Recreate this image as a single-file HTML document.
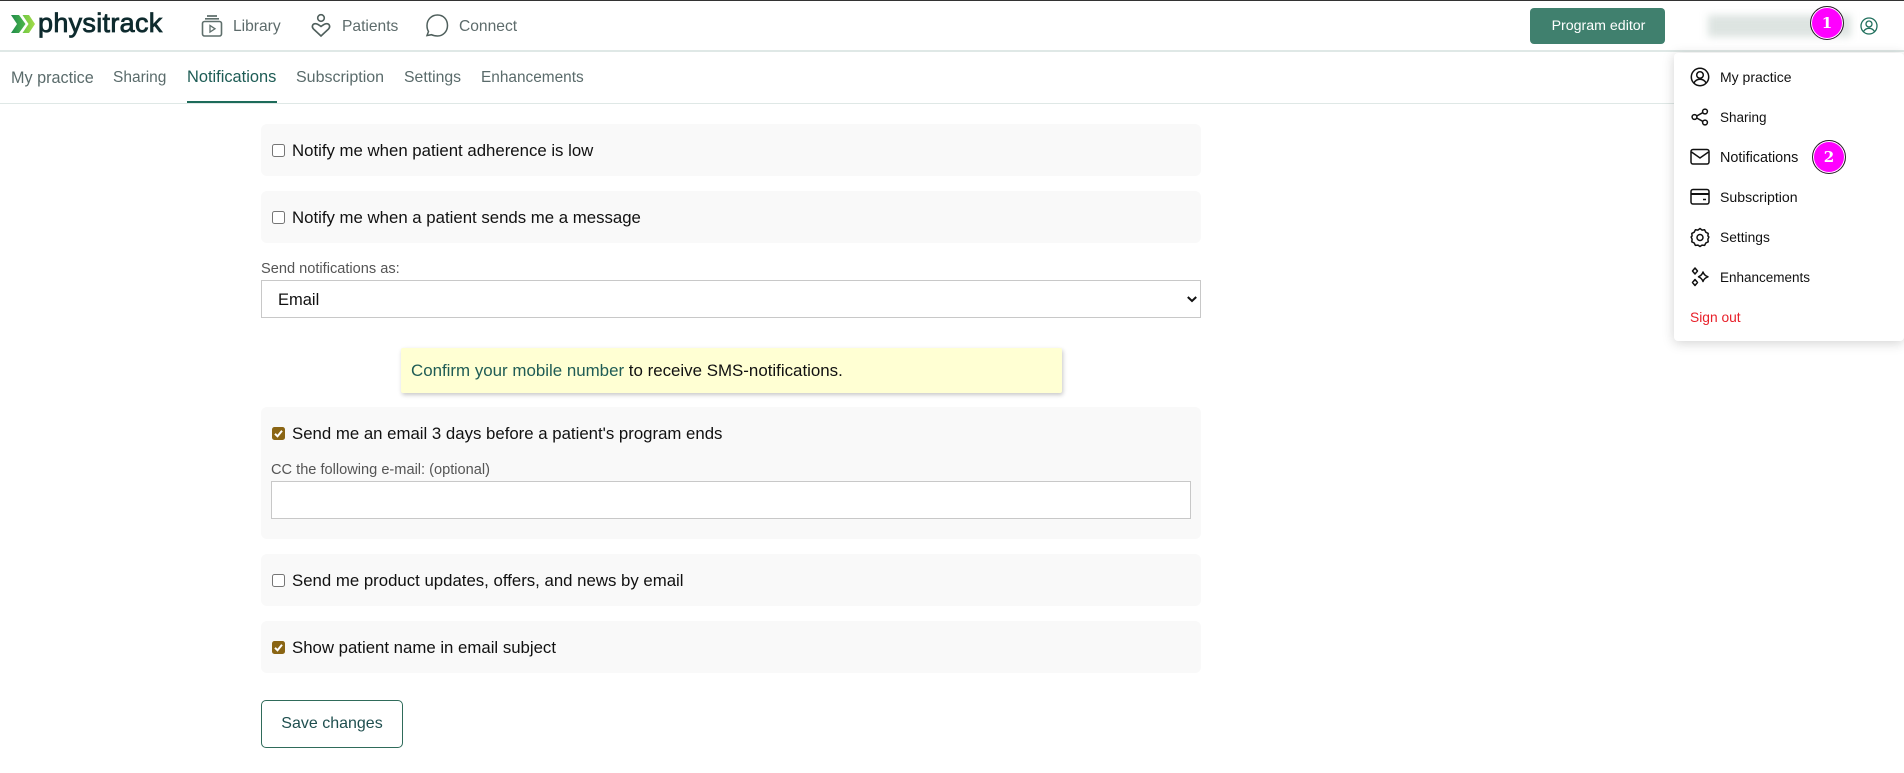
<!DOCTYPE html>
<html lang="en"><head><meta charset="utf-8"><title>Notifications</title>
<style>
*{box-sizing:border-box}
html,body{margin:0;padding:0;width:1904px;height:773px;overflow:hidden;background:#fff;font-family:"Liberation Sans",sans-serif}
.t{position:absolute;white-space:nowrap;line-height:20px;margin:0}
.a{position:absolute}
.nav{font-size:15.6px;color:#5d6b6b}
.sub{color:#5a6b6b}
.row{position:absolute;left:261px;width:940px;background:#f9f9f9;border-radius:6px}
.lab{font-size:16.8px;color:#111;left:292px}
.cb{position:absolute;left:272px;width:13px;height:13px;border:1px solid #767676;border-radius:2.500px;background:#fff}
.cb.on{background:#8a6514;border:0}
.m{position:absolute;left:1720px;color:#111}
svg{position:absolute;overflow:visible}
.circ{position:absolute;width:34px;height:34px;border-radius:50%;background:#f0f;border:1px solid #222;box-shadow:inset 0 0 0 1px #fff;color:#fff;font:bold 15px/32px "DejaVu Serif",serif;text-align:center}
</style></head><body>
<div class="a" style="left:0;top:0;width:1904px;height:1px;background:#333"></div>
<div class="a" style="left:0;top:50px;width:1904px;height:2px;background:#dfe8e6"></div>
<div class="a" style="left:0;top:103px;width:1904px;height:1px;background:#dfe8e6"></div>

<svg style="left:0;top:0" width="60" height="50"><defs><linearGradient id="g1" x1="0" x2="1"><stop offset="0" stop-color="#1f8a4c"/><stop offset="1" stop-color="#4fb84a"/></linearGradient><linearGradient id="g2" x1="0" x2="1"><stop offset="0" stop-color="#6cc644"/><stop offset="1" stop-color="#a5dc4a"/></linearGradient></defs>
<path d="M11 15h8l6.500 9-6.500 9h-8l6-9z" fill="url(#g1)"/><path d="M22.500 15h6.500l6 9-6 9h-6.500l6-9z" fill="url(#g2)"/></svg>
<div class="t" style="left:38px;top:11px;font-size:27px;line-height:24px;color:#0e2b2e;letter-spacing:.3px;-webkit-text-stroke:.8px #0e2b2e">physitrack</div>

<svg style="left:200px;top:12px" width="24" height="28" fill="none" stroke="#5f6f6c" stroke-width="1.6"><path d="M7 4h10M5 6.800h14" stroke-width="1.700"/><rect x="2.500" y="9.500" width="19" height="14.500" rx="2"/><path d="M10 13.500v6.500l5-3.200z" stroke-width="1.300"/></svg>
<div class="t nav" style="left:233px;top:17px">Library</div>
<svg style="left:310px;top:12px" width="22" height="28" fill="none" stroke="#4f5f5c" stroke-width="1.600"><circle cx="11" cy="6" r="3.300"/><path d="M11 24l-7.500-7c-2.200-2.200-1-5 1.500-5.300 2.500-.3 4 1.500 6 2.800 2-1.300 3.500-3.100 6-2.800 2.500.3 3.700 3.100 1.500 5.300z"/></svg>
<div class="t nav" style="left:342px;top:17px">Patients</div>
<svg style="left:425px;top:12px" width="24" height="28" fill="none" stroke="#4f5f5c" stroke-width="1.500"><path d="M12.500 3c6 0 10 4.500 10 10.500S18 24 12.500 24c-2.500 0-4.500-.5-6-1.300L2 23.500l1.500-4C2.500 18 2 16 2 13.500 2 7.500 6.500 3 12.500 3z"/></svg>
<div class="t nav" style="left:459px;top:17px">Connect</div>

<div class="a" style="left:1530px;top:8px;width:135px;height:36px;background:#40806e;border-radius:4px;color:#fff;font-size:14.200px;line-height:36px;text-align:center;padding-left:2px">Program editor</div>
<div class="a" style="left:1708px;top:15px;width:143px;height:22px;background:#dde4e1;filter:blur(4px)"></div>
<div class="circ" style="left:1810px;top:6px">1</div>
<svg style="left:1860px;top:17px" width="18" height="18" fill="none" stroke="#1f6f5c" stroke-width="1.300"><circle cx="9" cy="9" r="8"/><circle cx="9" cy="7" r="3"/><path d="M3.500 14.500c1.500-2.500 3.500-3.200 5.500-3.200s4 .7 5.500 3.200"/></svg>

<div class="t sub" style="left:11px;top:68px;font-size:16.2px">My practice</div>
<div class="t sub" style="left:113px;top:68px;font-size:15.5px">Sharing</div>
<div class="t sub" style="left:187px;top:67px;color:#1d5c55;font-size:16.4px">Notifications</div>
<div class="t sub" style="left:296px;top:68px;font-size:16px">Subscription</div>
<div class="t sub" style="left:404px;top:68px;font-size:15.8px">Settings</div>
<div class="t sub" style="left:481px;top:68px;font-size:15.4px">Enhancements</div>
<div class="a" style="left:187px;top:101px;width:90px;height:2px;background:#1d6b5a"></div>

<div class="row" style="top:124px;height:52px"></div>
<div class="cb" style="top:144px"></div>
<div class="t lab" style="top:141px">Notify me when patient adherence is low</div>
<div class="row" style="top:191px;height:52px"></div>
<div class="cb" style="top:211px"></div>
<div class="t lab" style="top:208px">Notify me when a patient sends me a message</div>

<div class="t" style="left:261px;top:259px;font-size:14.6px;color:#555">Send notifications as:</div>
<div class="a" style="left:261px;top:280px;width:940px;height:38px;border:1px solid #c8c8c8;background:#fff"></div>
<div class="t" style="left:278px;top:290px;font-size:16.5px;color:#111">Email</div>
<svg style="left:1187px;top:296px" width="10" height="7" fill="none" stroke="#111" stroke-width="2"><path d="M.8 1l4.200 4 4.200-4"/></svg>

<div class="a" style="left:401px;top:348px;width:661px;height:45px;background:#ffffd3;border-radius:2px;box-shadow:1px 2px 4px rgba(0,0,0,.22)"></div>
<div class="t" style="left:411px;top:361px;font-size:16.9px;color:#111"><span style="color:#1f5c55">Confirm your mobile number</span> to receive SMS-notifications.</div>

<div class="row" style="top:407px;height:132px"></div>
<div class="cb on" style="top:427px"></div>
<svg style="left:272px;top:427px" width="13" height="13" fill="none" stroke="#fff" stroke-width="2"><path d="M3 6.800l2.500 2.500L10 3.800"/></svg>
<div class="t lab" style="top:424px">Send me an email 3 days before a patient's program ends</div>
<div class="t" style="left:271px;top:460px;font-size:14.6px;color:#555">CC the following e-mail: (optional)</div>
<div class="a" style="left:271px;top:481px;width:920px;height:38px;border:1px solid #c8c8c8;background:#fff"></div>

<div class="row" style="top:554px;height:52px"></div>
<div class="cb" style="top:574px"></div>
<div class="t lab" style="top:571px">Send me product updates, offers, and news by email</div>
<div class="row" style="top:621px;height:52px"></div>
<div class="cb on" style="top:641px"></div>
<svg style="left:272px;top:641px" width="13" height="13" fill="none" stroke="#fff" stroke-width="2"><path d="M3 6.800l2.500 2.500L10 3.800"/></svg>
<div class="t lab" style="top:638px">Show patient name in email subject</div>

<div class="a" style="left:261px;top:700px;width:142px;height:48px;border:1px solid #2f6b5a;border-radius:5px;color:#1f4f4f;font-size:16px;line-height:46px;text-align:center">Save changes</div>

<div class="a" style="left:1674px;top:53px;width:230px;height:288px;background:#fff;border-radius:4px;box-shadow:0 2px 12px rgba(0,0,0,.18)"></div>
<svg style="left:1690px;top:67px" width="20" height="20" fill="none" stroke="#111" stroke-width="1.500"><circle cx="10" cy="10" r="8.700"/><circle cx="10" cy="8" r="3.300"/><path d="M4 16c1.500-3 4-3.700 6-3.700s4.500.7 6 3.700"/></svg>
<div class="t m" style="top:67px;font-size:14px">My practice</div>
<svg style="left:1691px;top:108px" width="18" height="18" fill="none" stroke="#111" stroke-width="1.500"><circle cx="3.500" cy="9" r="2.400"/><circle cx="14" cy="3.500" r="2.400"/><circle cx="14" cy="14.500" r="2.400"/><path d="M5.700 8l6-3.300M5.700 10l6 3.300"/></svg>
<div class="t m" style="top:108px;font-size:13.5px">Sharing</div>
<svg style="left:1690px;top:148px" width="20" height="18" fill="none" stroke="#111" stroke-width="1.500"><rect x="1" y="1.500" width="18" height="14.500" rx="2"/><path d="M1.500 4l8.500 6 8.500-6"/></svg>
<div class="t m" style="top:148px;font-size:14.4px">Notifications</div>
<svg style="left:1690px;top:188px" width="20" height="18" fill="none" stroke="#111" stroke-width="1.500"><rect x="1" y="1.500" width="18" height="14.500" rx="2"/><path d="M1 6h18" stroke-width="2"/><path d="M13 11.500h3"/></svg>
<div class="t m" style="top:187px;font-size:14.1px">Subscription</div>
<svg style="left:1690px;top:227px" width="20" height="20" fill="none" stroke="#111" stroke-width="1.500"><path d="M10 1.500l2 1.600 2.600-.3 1.200 2.400 2.400 1.200-.3 2.600 1 1-1 2.200.3 2.600-2.400 1.200-1.200 2.400-2.600-.3-2 1.400-2-1.400-2.600.3-1.200-2.400-2.400-1.200.3-2.600-1-2.200 1-1-.3-2.600 2.400-1.200 1.200-2.400 2.600.3z" stroke-linejoin="round"/><circle cx="10" cy="10.500" r="3"/></svg>
<div class="t m" style="top:228px;font-size:13.8px">Settings</div>
<svg style="left:1690px;top:267px" width="20" height="20" fill="none" stroke="#111" stroke-width="1.500" stroke-linejoin="round"><path d="M5 1l2.500 3L5 7 2.500 4zM5 12.500L7.500 15.500 5 18.500 2.500 15.500zM13 5c.8 2.500 2 3.700 5 4.800-3 1-4.200 2.300-5 4.700-.8-2.400-2-3.700-4.500-4.700C11 8.700 12.200 7.500 13 5z"/></svg>
<div class="t m" style="top:268px;font-size:13.5px">Enhancements</div>
<div class="t" style="left:1690px;top:308px;font-size:13.8px;color:#e8202a">Sign out</div>
<div class="circ" style="left:1812px;top:140px">2</div>
</body></html>
